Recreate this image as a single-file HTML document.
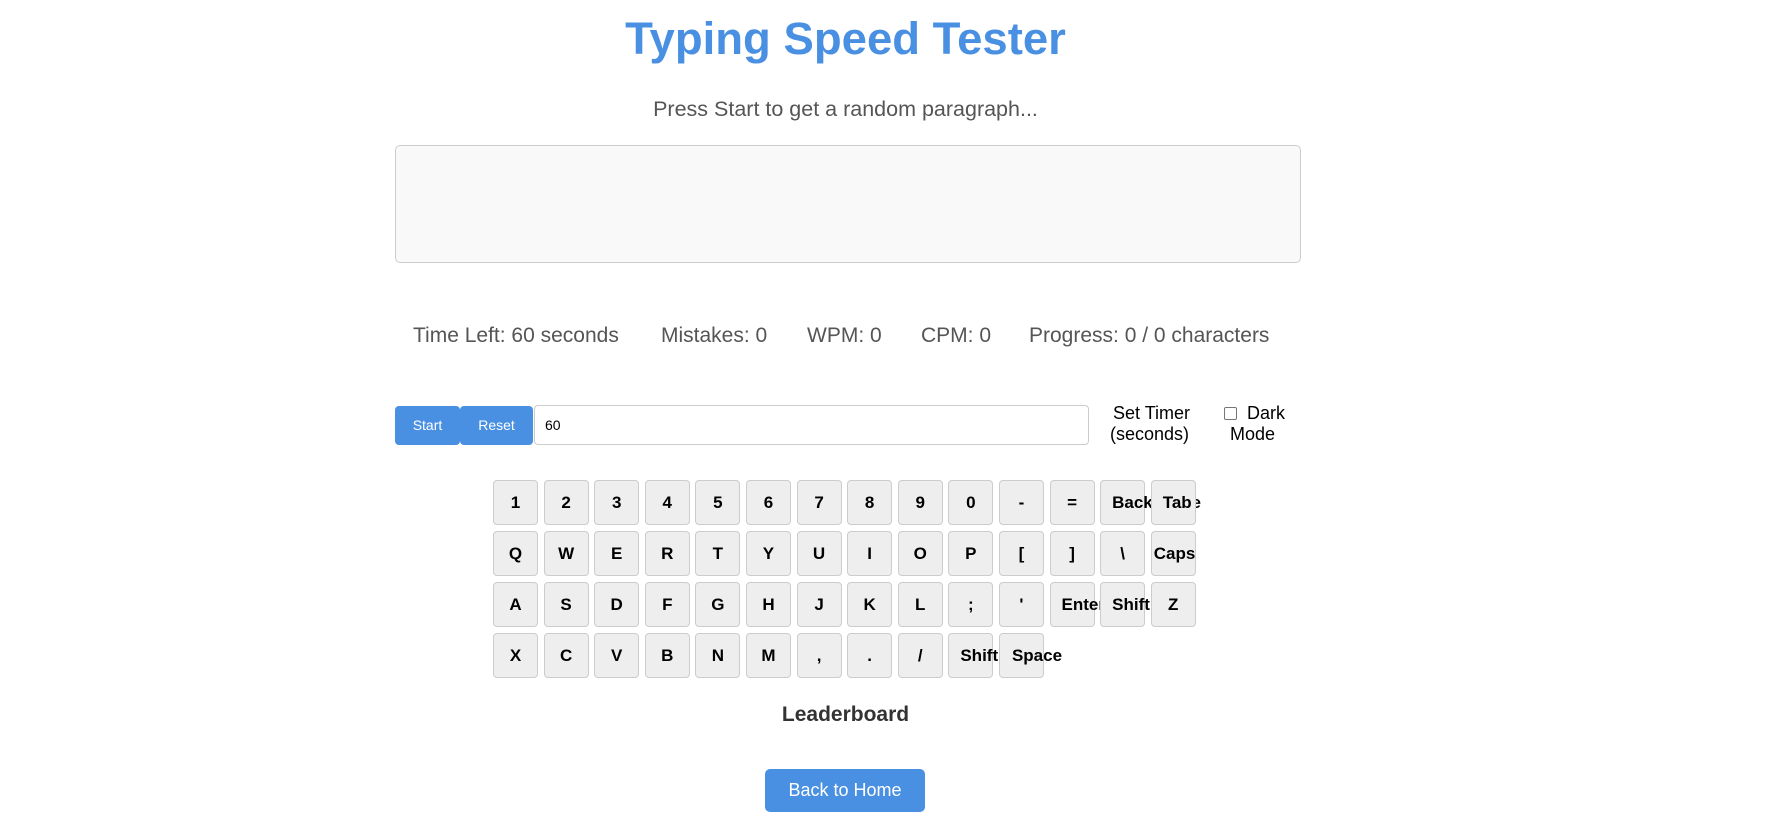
<!DOCTYPE html>
<html><head><meta charset="utf-8"><style>
*{box-sizing:border-box}
body{margin:0;width:1769px;height:835px;background:#fff;font-family:"Liberation Sans",Arial,sans-serif;position:relative;overflow:hidden}
.a{position:absolute;white-space:nowrap}
h1{position:absolute;margin:0;left:0;width:1691px;text-align:center;top:13px;font-size:45.5px;color:#4a90e2;font-weight:bold}
.sub{left:0;width:1691px;text-align:center;top:97px;font-size:21.5px;color:#555}
.ta{left:395px;top:145px;width:906px;height:118px;background:#f9f9f9;border:1px solid #ccc;border-radius:5px}
.st{top:324px;font-size:21px;color:#555}
.btn{background:#4a90e2;color:#fff;font-size:14px;border-radius:4px;text-align:center;line-height:39px;top:406px;height:39px}
.inp{left:534px;top:405px;width:555px;height:40px;border:1px solid #ccc;border-radius:4px;font-size:14px;padding-left:10px;line-height:38px}
.lb{font-size:18px;color:#000}
.kb{position:absolute;left:493px;top:480px;width:720px}
.k{float:left;width:45px;height:45px;margin:0 5.6px 6px 0;background:#eee;border:1px solid #ccc;border-radius:4px;font-weight:bold;font-size:17px;line-height:43px;text-align:center;white-space:nowrap;overflow:visible;position:relative}
.k.l{text-align:left;padding-left:11px}
</style></head><body>
<h1>Typing Speed Tester</h1>
<div class="a sub">Press Start to get a random paragraph...</div>
<div class="a ta"></div>
<div class="a st" style="left:413px">Time Left: 60 seconds</div>
<div class="a st" style="left:661px">Mistakes: 0</div>
<div class="a st" style="left:807px">WPM: 0</div>
<div class="a st" style="left:921px">CPM: 0</div>
<div class="a st" style="left:1029px">Progress: 0 / 0 characters</div>
<div class="a btn" style="left:395px;width:65px">Start</div>
<div class="a btn" style="left:460px;width:73px">Reset</div>
<div class="a inp">60</div>
<div class="a lb" style="left:1113px;top:403px">Set Timer</div>
<div class="a lb" style="left:1110px;top:424px">(seconds)</div>
<div class="a" style="left:1224px;top:407px;width:13px;height:13px;border:1px solid #767676;border-radius:2px"></div>
<div class="a lb" style="left:1247px;top:403px">Dark</div>
<div class="a lb" style="left:1230px;top:424px">Mode</div>
<div class="kb">
<div class="k">1</div><div class="k">2</div><div class="k">3</div><div class="k">4</div><div class="k">5</div><div class="k">6</div><div class="k">7</div><div class="k">8</div><div class="k">9</div><div class="k">0</div><div class="k">-</div><div class="k">=</div><div class="k l">Backspace</div><div class="k l">Tab</div>
<div class="k">Q</div><div class="k">W</div><div class="k">E</div><div class="k">R</div><div class="k">T</div><div class="k">Y</div><div class="k">U</div><div class="k">I</div><div class="k">O</div><div class="k">P</div><div class="k">[</div><div class="k">]</div><div class="k">\</div><div class="k l" style="padding-left:2px">Caps</div>
<div class="k">A</div><div class="k">S</div><div class="k">D</div><div class="k">F</div><div class="k">G</div><div class="k">H</div><div class="k">J</div><div class="k">K</div><div class="k">L</div><div class="k">;</div><div class="k">'</div><div class="k l">Enter</div><div class="k l">Shift</div><div class="k">Z</div>
<div class="k">X</div><div class="k">C</div><div class="k">V</div><div class="k">B</div><div class="k">N</div><div class="k">M</div><div class="k">,</div><div class="k">.</div><div class="k">/</div><div class="k l">Shift</div><div class="k l" style="padding-left:12px">Space</div>
</div>
<div class="a" style="left:0;width:1691px;text-align:center;top:703px;font-size:21px;font-weight:bold;color:#333">Leaderboard</div>
<div class="a" style="left:765px;top:769px;width:160px;height:43px;background:#4a90e2;color:#fff;border-radius:5px;font-size:18px;text-align:center;line-height:43px">Back to Home</div>
</body></html>
